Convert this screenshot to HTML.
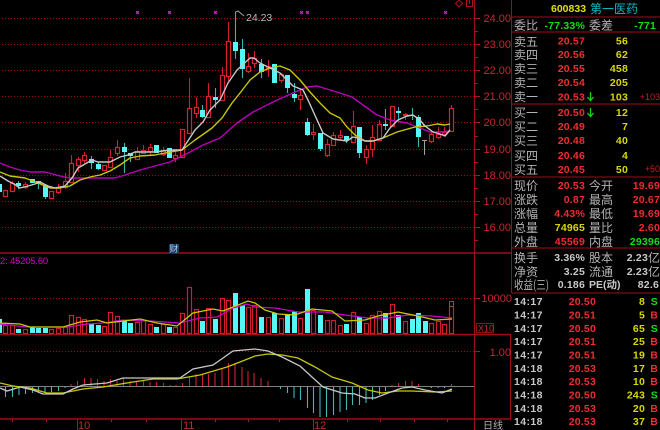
<!DOCTYPE html>
<html><head><meta charset="utf-8"><style>
html,body{margin:0;padding:0;background:#000;width:660px;height:430px;overflow:hidden}
svg{display:block;font-family:"Liberation Sans","Noto Sans CJK SC",sans-serif}
.l{font-size:12px;fill:#b4b4b4;font-family:"Noto Sans CJK SC","Liberation Sans",sans-serif}
.n{font-size:10.5px;font-weight:bold;text-anchor:end;letter-spacing:.2px}
.r{fill:#f02c30}.y{fill:#d8d800}.g{fill:#10e010}.w{fill:#c8c8c8}
.ax{font-size:11px;fill:#c82830;text-anchor:end}
.t{font-size:10.5px;font-weight:bold;fill:#c8c8c8;letter-spacing:.4px}
</style></head><body>
<svg width="660" height="430" viewBox="0 0 660 430" xmlns="http://www.w3.org/2000/svg">
<rect width="660" height="430" fill="#000"/>
<!-- grid -->
<g stroke="#960c18" stroke-width="1" stroke-dasharray="1 2" fill="none">
<path d="M2 18.5H474M2 44.5H474M2 70.5H474M2 96.5H474M2 122.5H474M2 149.5H474M2 175.5H474M2 201.5H474M2 227.5H474M2 298.5H474M2 351.5H474"/>
</g>
<!-- frame -->
<g stroke="#a00c16" stroke-width="1.4" fill="none">
<path d="M0 253H511M0 334.5H511M0 419H511"/>
<path d="M474.5 0V430" stroke-width="1.2"/>
<path d="M511.5 0V293" stroke-width="1"/>
<path d="M510.5 335V419" stroke-width="1"/>
<path d="M512 17H660M512 32H660M512 104H660M512 177H660M512 248H660M512 293H660" stroke-width="1"/>
</g>
<g stroke="#a81420" stroke-width="1" fill="none">
<path d="M475 18.5h5M475 31.5h3M475 44.5h5M475 57.5h3M475 70.5h5M475 83.5h3M475 96.5h5M475 109.5h3M475 122.5h5M475 136.5h3M475 149.5h5M475 162.5h3M475 175.5h5M475 188.5h3M475 201.5h5M475 214.5h3M475 227.5h5M475 240.5h3M475 298.5h5M475 351.5h5"/>
<path d="M12.5 419v3M46.5 419v3M77.5 419v11M111.5 419v3M146.5 419v3M181.5 419v11M215.5 419v3M248.5 419v3M279.5 419v3M313.5 419v11M347.5 419v3M380.5 419v3M414.5 419v3M447.5 419v3"/>
<path d="M455.5 3.5l3.5-3.5 3.5 3.5-3.5 3.5z"/>
<path d="M466.5 0V6.5H472.5V0M469.5 0V4"/>
</g>
<!-- axis labels -->
<text class="ax" x="511" y="22">24.00</text><text class="ax" x="511" y="48">23.00</text><text class="ax" x="511" y="74">22.00</text><text class="ax" x="511" y="100">21.00</text><text class="ax" x="511" y="126">20.00</text><text class="ax" x="511" y="153">19.00</text><text class="ax" x="511" y="179">18.00</text><text class="ax" x="511" y="205">17.00</text><text class="ax" x="511" y="231">16.00</text>
<text class="ax" x="512" y="302">10000</text><text class="ax" x="511" y="356">1.00</text>
<rect x="476.5" y="323.5" width="17" height="9" fill="none" stroke="#901018"/>
<text x="478" y="331.5" font-size="9" fill="#c82830">X10</text>
<text x="78" y="429" font-size="11" fill="#c82830">10</text><text x="183" y="429" font-size="11" fill="#c82830">11</text><text x="314" y="429" font-size="11" fill="#c82830">12</text>
<text x="483" y="429" font-size="10" fill="#b4b4b4" style="font-family:'Noto Sans CJK SC',sans-serif">日线</text>
<text x="0" y="264" font-size="9.5" fill="#d000d0" letter-spacing="-.2">2: 45205.60</text>
<rect x="169" y="244" width="10" height="9" fill="#143c64"/>
<text x="169.5" y="252" font-size="9" fill="#a8c8e0" style="font-family:'Noto Sans CJK SC',sans-serif">财</text>
<!-- markers -->
<g stroke="#e000e0" stroke-width="1" fill="none">
<path d="M136 11l3 3m0-3l-3 3M168 11l3 3m0-3l-3 3M214 11l3 3m0-3l-3 3M300 11l3 3m0-3l-3 3M306 11l3 3m0-3l-3 3M444 11l3 3m0-3l-3 3"/>
</g>
<g fill="#ff20ff"><rect x="136.5" y="11.5" width="2" height="2"/><rect x="168.5" y="11.5" width="2" height="2"/><rect x="214.5" y="11.5" width="2" height="2"/><rect x="300.5" y="11.5" width="2" height="2"/><rect x="306.5" y="11.5" width="2" height="2"/><rect x="444.5" y="11.5" width="2" height="2"/></g>
<!-- wicks red -->
<path fill="none" stroke="#d01c2c" stroke-width="1.1" d="M12.5 181V192M25.5 182V189M58.5 184V194M65.5 173V189M71.5 155V183M78.5 157V172M84.5 152V163M110.5 150V168M117.5 140V156M137.5 147V160M143.5 145V154M150.5 144V155M163.5 147V156M175.5 152V162M189.5 78V134M196.5 97V118M208.5 83V118M222.5 67V101M228.5 22V81M248.5 53V73M254.5 51V68M268.5 60V77M281.5 73V83M300.5 90V110M313.5 124V140M327.5 139V157M333.5 132V146M340.5 130V139M353.5 111V143M366.5 145V164M372.5 125V157M379.5 120V141M405.5 113V120M431.5 130V143M438.5 127V139M444.5 127V136M451.5 105V132"/>
<!-- wicks cyan -->
<path fill="none" stroke="#38b4b4" stroke-width="1.1" d="M18.5 181V189M38.5 181V189M45.5 185V199M91.5 156V169M98.5 162V170M124.5 143V173M130.5 153V162M202.5 105V118M215.5 88V108M235.5 12V59M242.5 39V78M261.5 59V78M287.5 75V93M294.5 83V102M307.5 118V136M320.5 133V151M346.5 136V143M359.5 127V158M385.5 109V130M398.5 107V122M412.5 108V120M418.5 115V147"/>
<path fill="none" stroke="#a0a0a0" stroke-width="1" d="M422 140.5h5M424.5 140V155"/>
<!-- red bodies -->
<g fill="#000" stroke="#d82030" stroke-width="1.2">
<rect x="3.5" y="190.5" width="4" height="6"/><rect x="10.5" y="183.5" width="4" height="8"/><rect x="23.5" y="184.5" width="4" height="3"/><rect x="49.5" y="191.5" width="4" height="7"/><rect x="56.5" y="187.5" width="4" height="5"/><rect x="63.5" y="181.5" width="4" height="6"/><rect x="69.5" y="163.5" width="4" height="19"/><rect x="76.5" y="159.5" width="4" height="6"/><rect x="82.5" y="155.5" width="4" height="5"/><rect x="102.5" y="165.5" width="4" height="5"/><rect x="108.5" y="157.5" width="4" height="10"/><rect x="115.5" y="147.5" width="4" height="6"/><rect x="135.5" y="151.5" width="4" height="8"/><rect x="141.5" y="150.5" width="4" height="3"/><rect x="148.5" y="147.5" width="4" height="4"/><rect x="161.5" y="150.5" width="4" height="4"/><rect x="173.5" y="155.5" width="4" height="3"/><rect x="180.5" y="129.5" width="4" height="28"/><rect x="187.5" y="108.5" width="4" height="25"/><rect x="194.5" y="107.5" width="4" height="6"/><rect x="206.5" y="96.5" width="4" height="21"/><rect x="220.5" y="75.5" width="4" height="25"/><rect x="226.5" y="41.5" width="4" height="35"/><rect x="246.5" y="66.5" width="4" height="5"/><rect x="252.5" y="58.5" width="4" height="5"/><rect x="266.5" y="66.5" width="4" height="2"/><rect x="279.5" y="74.5" width="4" height="6"/><rect x="298.5" y="95.5" width="4" height="4"/><rect x="311.5" y="132.5" width="4" height="2"/><rect x="325.5" y="144.5" width="4" height="11"/><rect x="331.5" y="135.5" width="4" height="10"/><rect x="338.5" y="135.5" width="4" height="2"/><rect x="351.5" y="126.5" width="4" height="16"/><rect x="364.5" y="149.5" width="4" height="8"/><rect x="370.5" y="137.5" width="4" height="12"/><rect x="377.5" y="124.5" width="4" height="16"/><rect x="390.5" y="106.5" width="4" height="20"/><rect x="403.5" y="114.5" width="4" height="1"/><rect x="429.5" y="134.5" width="4" height="7"/><rect x="436.5" y="134.5" width="4" height="3"/><rect x="442.5" y="132.5" width="4" height="2"/><rect x="449.5" y="108.5" width="4" height="23"/>
</g>
<!-- cyan bodies -->
<g fill="#54f8f8">
<rect x="-2" y="184" width="4" height="8"/><rect x="16" y="183" width="5" height="3"/><rect x="30" y="179" width="5" height="4"/><rect x="36" y="181" width="5" height="3"/><rect x="43" y="185" width="5" height="12"/><rect x="89" y="159" width="5" height="4"/><rect x="96" y="164" width="5" height="5"/><rect x="122" y="147" width="5" height="5"/><rect x="128" y="153" width="5" height="3"/><rect x="154" y="145" width="5" height="8"/><rect x="167" y="148" width="5" height="10"/><rect x="200" y="110" width="5" height="7"/><rect x="213" y="97" width="5" height="3"/><rect x="233" y="42" width="5" height="9"/><rect x="240" y="49" width="5" height="20"/><rect x="259" y="64" width="5" height="8"/><rect x="272" y="64" width="5" height="19"/><rect x="285" y="75" width="5" height="13"/><rect x="292" y="94" width="5" height="4"/><rect x="305" y="122" width="5" height="13"/><rect x="318" y="133" width="5" height="16"/><rect x="344" y="136" width="5" height="4"/><rect x="357" y="127" width="5" height="26"/><rect x="383" y="124" width="5" height="2"/><rect x="396" y="111" width="5" height="2"/><rect x="416" y="117" width="5" height="20"/>
</g>
<!-- MAs -->
<g fill="none" stroke-linejoin="round" stroke-width="1.4">
<path stroke="#b800b8" d="M0 163L10 167 20 170 30 172 45 172 60 176 70 178 85 178 100 178 115 178 125 175 140 170 155 166 170 162 190 152 203 145 220 138 237 123 253 112 273 102 293 93 307 87 317 86 340 93 352 97 363 105 377 115 390 120 407 123 420 128 430 132 440 132 450 131"/>
<path stroke="#c8c800" d="M0 172L10 176 25 178 38 183 50 188 60 188 70 186 75 183 80 180 90 177 100 175 110 171 120 165 130 158 140 156 155 155 170 152 182 150 195 140 205 133 212 128 222 118 232 103 240 93 250 80 260 72 270 68 280 66 290 70 300 80 310 92 320 103 330 113 340 118 347 127 355 135 365 141 373 141 383 138 397 132 415 127 427 126 437 124 445 125 450 124"/>
<path stroke="#c8c8c8" d="M0 176L8 181 14 184 20 188 28 186 35 184 40 182 48 186 55 188 65 186 72 178 78 168 85 164 92 160 98 162 110 162 120 157 128 155 135 152 145 152 155 152 170 150 182 150 195 130 203 122 210 110 220 100 228 83 237 70 250 58 254 58 260 63 270 68 280 73 293 86 303 90 308 100 323 133 333 139 340 140 347 141 353 137 358 138 365 141 373 141 383 138 390 128 398 120 407 116 413 115 420 120 425 126 433 132 440 134 445 136 450 130"/>
</g>
<path fill="none" stroke="#a0a0a0" d="M235.5 12L238 11 244 16"/>
<text x="246" y="21" font-size="10.5" fill="#b8b8b8">24.23</text>
<!-- volume -->
<g fill="#000" stroke="#d01c2c" stroke-width="1.2">
<rect x="3.5" y="325.5" width="4" height="8"/><rect x="10.5" y="325.5" width="4" height="8"/><rect x="23.5" y="329.5" width="4" height="4"/><rect x="49.5" y="329.5" width="4" height="4"/><rect x="56.5" y="328.5" width="4" height="5"/><rect x="63.5" y="327.5" width="4" height="6"/><rect x="69.5" y="315.5" width="4" height="18"/><rect x="76.5" y="317.5" width="4" height="16"/><rect x="82.5" y="319.5" width="4" height="14"/><rect x="102.5" y="326.5" width="4" height="7"/><rect x="108.5" y="312.5" width="4" height="21"/><rect x="115.5" y="316.5" width="4" height="17"/><rect x="135.5" y="322.5" width="4" height="11"/><rect x="141.5" y="320.5" width="4" height="13"/><rect x="148.5" y="324.5" width="4" height="9"/><rect x="161.5" y="324.5" width="4" height="9"/><rect x="173.5" y="327.5" width="4" height="6"/><rect x="180.5" y="313.5" width="4" height="20"/><rect x="187.5" y="287.5" width="4" height="46"/><rect x="194.5" y="309.5" width="4" height="24"/><rect x="206.5" y="308.5" width="4" height="25"/><rect x="220.5" y="298.5" width="4" height="35"/><rect x="226.5" y="300.5" width="4" height="33"/><rect x="246.5" y="307.5" width="4" height="26"/><rect x="252.5" y="305.5" width="4" height="28"/><rect x="266.5" y="317.5" width="4" height="16"/><rect x="279.5" y="318.5" width="4" height="15"/><rect x="298.5" y="318.5" width="4" height="15"/><rect x="311.5" y="310.5" width="4" height="23"/><rect x="325.5" y="320.5" width="4" height="13"/><rect x="331.5" y="320.5" width="4" height="13"/><rect x="338.5" y="325.5" width="4" height="8"/><rect x="351.5" y="312.5" width="4" height="21"/><rect x="364.5" y="323.5" width="4" height="10"/><rect x="370.5" y="315.5" width="4" height="18"/><rect x="377.5" y="311.5" width="4" height="22"/><rect x="390.5" y="304.5" width="4" height="29"/><rect x="403.5" y="321.5" width="4" height="12"/><rect x="429.5" y="323.5" width="4" height="10"/><rect x="436.5" y="321.5" width="4" height="12"/><rect x="442.5" y="324.5" width="4" height="9"/><rect x="449.5" y="306.5" width="4" height="27"/>
</g>
<rect x="449.5" y="301.5" width="4" height="5" fill="none" stroke="#666618"/>
<g fill="#54f8f8">
<rect x="-2" y="319" width="4" height="14"/><rect x="16" y="329" width="5" height="4"/><rect x="30" y="327" width="5" height="6"/><rect x="36" y="328" width="5" height="5"/><rect x="43" y="328" width="5" height="5"/><rect x="89" y="324" width="5" height="9"/><rect x="96" y="325" width="5" height="8"/><rect x="122" y="321" width="5" height="12"/><rect x="128" y="323" width="5" height="10"/><rect x="154" y="327" width="5" height="6"/><rect x="167" y="327" width="5" height="6"/><rect x="200" y="321" width="5" height="12"/><rect x="213" y="319" width="5" height="14"/><rect x="233" y="293" width="5" height="40"/><rect x="240" y="305" width="5" height="28"/><rect x="259" y="317" width="5" height="16"/><rect x="272" y="313" width="5" height="20"/><rect x="285" y="315" width="5" height="18"/><rect x="292" y="311" width="5" height="22"/><rect x="305" y="289" width="5" height="44"/><rect x="318" y="315" width="5" height="18"/><rect x="344" y="324" width="5" height="9"/><rect x="357" y="317" width="5" height="16"/><rect x="383" y="313" width="5" height="20"/><rect x="396" y="315" width="5" height="18"/><rect x="410" y="319" width="5" height="14"/><rect x="416" y="313" width="5" height="20"/><rect x="423" y="321" width="5" height="12"/>
</g>
<g fill="none" stroke-width="1.3">
<path stroke="#c800c8" d="M0 324L27 327 67 327 87 324 103 323 123 320 150 321 180 323 200 318 217 317 233 308 247 304 255 307 275 308 298 312 312 312 325 312 345 315 368 318 388 318 408 315 432 316 452 318"/>
<path stroke="#c8c800" d="M0 323L20 324 30 327 63 327 80 322 97 320 107 323 140 319 157 323 177 326 193 313 203 311 213 309 223 311 233 307 248 301 255 303 265 310 278 314 295 315 312 309 332 311 345 321 365 320 378 316 398 312 418 316 435 320 452 319"/>
</g>
<!-- MACD -->
<path stroke="#808080" d="M0 386.5H474"/>
<path fill="none" stroke="#d02030" stroke-width="1.1" d="M71 386V384M77.5 386V381M84.5 386V378M91 386V378M97.5 386V379M104 386V381M110.5 386V379M117 386V381M123.5 386V378M130 386V381M136.5 386V381M143.5 386V381M150 386V382M156.5 386V382M163.5 386V383M170 386V385M176 386V385M182.5 386V383M189.5 386V377M196 386V374M202.5 386V374M208.5 386V374M215 386V373M222 386V369M228.5 386V363M235 386V363M242 386V367M248 386V371M254 386V373M261 386V378M268 386V381M392 386V385M398.5 386V383M405.5 386V381M412 386V381M418.5 386V384M451.5 386V384"/>
<path fill="none" stroke="#40b8b8" stroke-width="1.1" d="M5.5 387V397M12.5 387V397M19 387V395M25.5 387V394M32.5 387V393M38.5 387V392M45 387V393M51.5 387V392M58.5 387V391M65 387V388M280.5 387V389M287.5 387V393M294 387V398M300.5 387V400M307.5 387V408M313.5 387V413M320 387V417M326.5 387V417M333.5 387V415M340 387V412M346.5 387V410M352.5 387V405M359.5 387V405M366 387V403M372.5 387V400M379.5 387V395M385.5 387V391M431.5 387V388M438 387V388M444.5 387V388"/>
<g fill="none" stroke-width="1.3">
<path stroke="#c8c800" d="M0 383L13 386 30 388 47 393 63 393 83 389 103 387 133 382 153 379 177 379 200 375 227 367 240 362 255 356 268 354 282 355 298 358 315 367 332 377 352 383 368 390 382 393 398 391 412 391 435 392 452 391"/>
<path stroke="#c8c8c8" d="M0 388L7 391 20 387 33 390 43 394 63 394 73 389 83 385 107 383 123 378 147 378 167 378 180 378 193 369 213 365 223 358 233 351 255 349 268 351 282 357 300 366 312 377 323 387 342 393 355 394 365 398 375 398 388 393 402 388 412 387 425 390 442 393 452 389"/>
</g>
<!-- right header -->
<text x="551" y="12" font-size="10.5" font-weight="bold" fill="#e0e000">600833</text>
<text x="590" y="13" font-size="12" fill="#10b8c8" style="font-family:'Noto Sans CJK SC',sans-serif">第一医药</text>
<text class="l" x="514" y="29.5">委比</text><text class="l" x="589" y="29.5">委差</text>
<text class="n g" x="585" y="29">-77.33%</text><text class="n g" x="656" y="29">-771</text>
<!-- ask -->
<text class="l" x="514" y="46">卖五</text><text class="l" x="514" y="59">卖四</text><text class="l" x="514" y="73">卖三</text><text class="l" x="514" y="87">卖二</text><text class="l" x="514" y="101">卖一</text>
<text class="l" x="514" y="117">买一</text><text class="l" x="514" y="131">买二</text><text class="l" x="514" y="145">买三</text><text class="l" x="514" y="160">买四</text><text class="l" x="514" y="174">买五</text>
<text class="n r" x="585" y="44.5">20.57</text><text class="n y" x="628" y="44.5">56</text>
<text class="n r" x="585" y="58">20.56</text><text class="n y" x="628" y="58">62</text>
<text class="n r" x="585" y="72">20.55</text><text class="n y" x="628" y="72">458</text>
<text class="n r" x="585" y="86">20.54</text><text class="n y" x="628" y="86">205</text>
<text class="n r" x="585" y="100.5">20.53</text><text class="n y" x="628" y="100.5">103</text>
<text x="660" y="100" font-size="9" text-anchor="end" fill="#c02028">+103</text>
<text class="n r" x="585" y="116">20.50</text><text class="n y" x="628" y="116">12</text>
<text class="n r" x="585" y="130">20.49</text><text class="n y" x="628" y="130">7</text>
<text class="n r" x="585" y="144">20.48</text><text class="n y" x="628" y="144">40</text>
<text class="n r" x="585" y="159">20.46</text><text class="n y" x="628" y="159">4</text>
<text class="n r" x="585" y="173">20.45</text><text class="n y" x="628" y="173">50</text>
<text x="660" y="172" font-size="9" text-anchor="end" fill="#c02028">+50</text>
<path fill="none" stroke="#10d810" stroke-width="1.3" d="M590.5 92V100M587.5 97l3 3.5 3-3.5M590.5 108V116M587.5 113l3 3.5 3-3.5"/>
<!-- quote -->
<text class="l" x="514" y="190">现价</text><text class="l" x="589" y="190">今开</text>
<text class="l" x="514" y="204">涨跌</text><text class="l" x="589" y="204">最高</text>
<text class="l" x="514" y="218">涨幅</text><text class="l" x="589" y="218">最低</text>
<text class="l" x="514" y="232">总量</text><text class="l" x="589" y="232">量比</text>
<text class="l" x="514" y="246">外盘</text><text class="l" x="589" y="246">内盘</text>
<text class="n r" x="585" y="189">20.53</text><text class="n r" x="660" y="189">19.69</text>
<text class="n r" x="585" y="203">0.87</text><text class="n r" x="660" y="203">20.67</text>
<text class="n r" x="585" y="217">4.43%</text><text class="n r" x="660" y="217">19.69</text>
<text class="n y" x="585" y="231">74965</text><text class="n r" x="660" y="231">2.60</text>
<text class="n r" x="585" y="245">45569</text><text class="n g" x="660" y="245">29396</text>
<text class="l" x="514" y="262">换手</text><text class="l" x="589" y="262">股本</text>
<text class="l" x="514" y="276">净资</text><text class="l" x="589" y="276">流通</text>
<text class="l" x="514" y="289" textLength="35" lengthAdjust="spacingAndGlyphs">收益(三)</text><text x="589" y="288" font-size="10.5" font-weight="bold" fill="#c8c8c8">PE(动)</text>
<text class="n w" x="585" y="261">3.36%</text><text class="n w" x="648" y="261">2.23</text><text class="l" x="648" y="262">亿</text>
<text class="n w" x="585" y="275">3.25</text><text class="n w" x="648" y="275">2.23</text><text class="l" x="648" y="276">亿</text>
<text class="n w" x="585" y="288">0.186</text><text class="n w" x="659" y="288">82.6</text>
<!-- trades -->
<text class="t" x="514" y="305">14:17</text><text class="n r" x="596" y="305">20.50</text><text class="n y" x="645" y="305">8</text><text class="n g" x="658" y="305">S</text>
<text class="t" x="514" y="318.5">14:17</text><text class="n r" x="596" y="318.5">20.51</text><text class="n y" x="645" y="318.5">5</text><text class="n r" x="658" y="318.5">B</text>
<text class="t" x="514" y="332">14:17</text><text class="n r" x="596" y="332">20.50</text><text class="n y" x="645" y="332">65</text><text class="n g" x="658" y="332">S</text>
<text class="t" x="514" y="345">14:17</text><text class="n r" x="596" y="345">20.51</text><text class="n y" x="645" y="345">25</text><text class="n r" x="658" y="345">B</text>
<text class="t" x="514" y="358.5">14:17</text><text class="n r" x="596" y="358.5">20.51</text><text class="n y" x="645" y="358.5">19</text><text class="n r" x="658" y="358.5">B</text>
<text class="t" x="514" y="372">14:18</text><text class="n r" x="596" y="372">20.53</text><text class="n y" x="645" y="372">17</text><text class="n r" x="658" y="372">B</text>
<text class="t" x="514" y="385">14:18</text><text class="n r" x="596" y="385">20.53</text><text class="n y" x="645" y="385">10</text><text class="n r" x="658" y="385">B</text>
<text class="t" x="514" y="398.5">14:18</text><text class="n r" x="596" y="398.5">20.50</text><text class="n y" x="645" y="398.5">243</text><text class="n g" x="658" y="398.5">S</text>
<text class="t" x="514" y="412">14:18</text><text class="n r" x="596" y="412">20.53</text><text class="n y" x="645" y="412">20</text><text class="n r" x="658" y="412">B</text>
<text class="t" x="514" y="425">14:18</text><text class="n r" x="596" y="425">20.53</text><text class="n y" x="645" y="425">37</text><text class="n r" x="658" y="425">B</text>
</svg>
</body></html>
